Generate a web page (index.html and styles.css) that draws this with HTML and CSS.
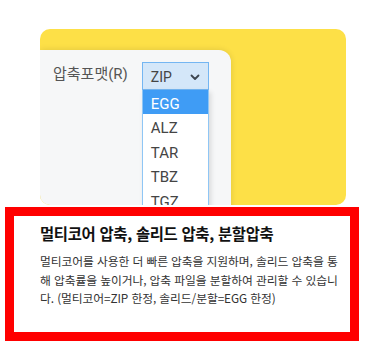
FILE: index.html
```html
<!DOCTYPE html>
<html lang="ko">
  <head>
    <meta charset="UTF-8" />
    <meta name="viewport" content="width=device-width, initial-scale=1.0" />
    <title>압축포맷</title>
    <link rel="stylesheet" href="styles.css">
  </head>
  <body>
    <div class="preview">
      <div class="panel">
        <span class="label">압축포맷(R)</span>
        <div class="combo">
          <div class="select">
            <span>ZIP</span>
            <svg class="chevron" width="10" height="7" viewBox="0 0 10 7">
              <path d="M1.5 1.5 L5 5 L8.5 1.5" fill="none" stroke="#3d4650" stroke-width="1.8" stroke-linecap="round" stroke-linejoin="round"/>
            </svg>
          </div>
          <ul class="options">
            <li class="active">EGG</li>
            <li>ALZ</li>
            <li>TAR</li>
            <li>TBZ</li>
            <li>TGZ</li>
          </ul>
        </div>
      </div>
    </div>

    <div class="feature">
      <h3>멀티코어 압축, 솔리드 압축, 분할압축</h3>
      <p>멀티코어를 사용한 더 빠른 압축을 지원하며, 솔리드 압축을 통해 압축률을 높이거나, 압축 파일을 분할하여 관리할 수 있습니다. (멀티코어=ZIP 한정, 솔리드/분할=EGG 한정)</p>
    </div>
  </body>
</html>
```

FILE: styles.css
```css
body {
  margin: 0;
  background: #fff;
  font-family: Roboto, "Noto Sans CJK KR", sans-serif;
  color: #333;
}
.preview {
  margin: 29px 0 0 40px;
  width: 306px;
  height: 176px;
  background: #fde047;
  border-radius: 10px;
  overflow: hidden;
}
.panel {
  margin-top: 21px;
  width: 178px;
  height: 200px;
  padding: 12px 0 0 13px;
  background: #f6f7f8;
  border-radius: 0 12px 0 0;
  box-shadow: 0 0 6px rgba(0, 0, 0, 0.12);
  display: flex;
  align-items: flex-start;
  gap: 14px;
}
.label {
  font-size: 15px;
  color: #555;
  line-height: 20px;
  margin-top: 2px;
}
.combo {
  width: 67px;
  display: flex;
  flex-direction: column;
}
.select {
  box-sizing: border-box;
  height: 28px;
  border: 1.5px solid #74b6f2;
  background: #d4e7f9;
  display: flex;
  align-items: center;
  justify-content: space-between;
  padding: 1px 8px 0 8px;
  font-size: 14px;
  color: #444;
}
.chevron {
  margin-top: 1px;
}
.options {
  list-style: none;
  margin: 0;
  padding: 0;
  background: #fff;
  border: 1px solid #8fc6f5;
  border-top: none;
  box-shadow: 2px 2px 5px rgba(0, 0, 0, 0.12);
}
.options li {
  box-sizing: border-box;
  height: 24.4px;
  line-height: 24.4px;
  padding: 2px 0 0 8px;
  font-size: 15px;
  color: #444;
}
.options li.active {
  background: #3f9cf5;
  color: #fff;
}
.feature {
  margin: 2px 0 0 5px;
  width: 302px;
  height: 116px;
  border: 9px solid #ff0000;
  padding: 0 8px 0 26px;
  background: #fff;
  font-family: "Noto Sans CJK KR", sans-serif;
}
.feature h3 {
  margin: 7px 0 0;
  font-size: 15.4px;
  font-weight: 700;
  color: #111;
  line-height: 20px;
  letter-spacing: -0.3px;
}
.feature p {
  margin: 9px 0 0;
  font-size: 11.8px;
  line-height: 18.5px;
  color: #333;
  letter-spacing: -0.1px;
  word-break: break-all;
}
```
